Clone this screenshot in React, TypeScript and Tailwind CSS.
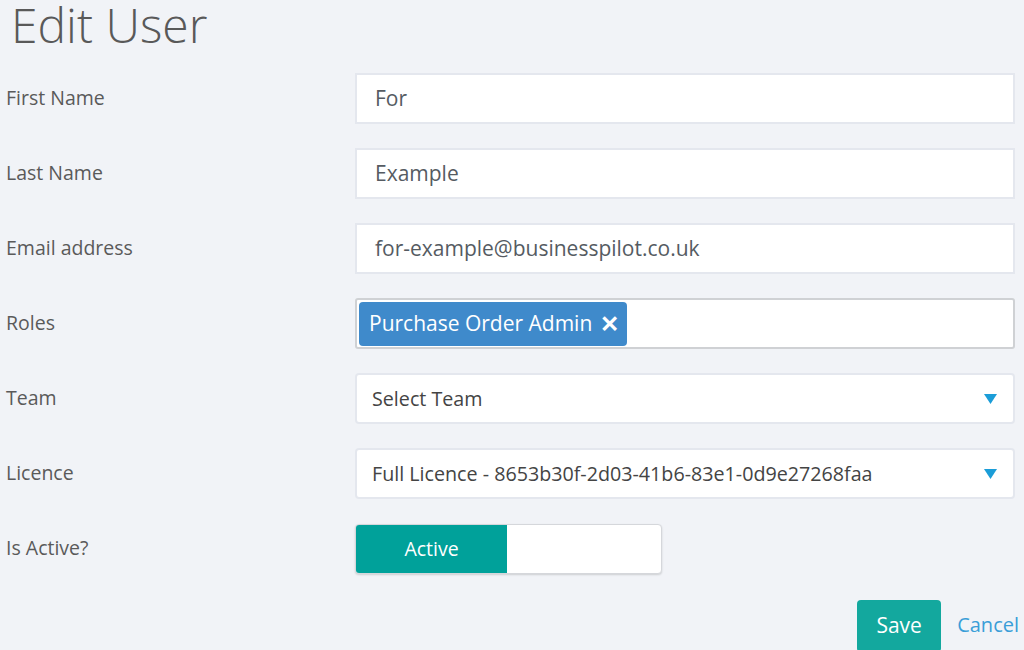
import React from "react";

const Row = ({ label, children }: { label: string; children: React.ReactNode }) => (
  <div className="flex items-center h-[51px]">
    <div className="w-[349px] text-[19.5px] text-[#5a5a5a] -mt-[2px]">{label}</div>
    <div className="w-[660px]">{children}</div>
  </div>
);

const TextBox = ({ value }: { value: string }) => (
  <div className="h-[51px] bg-white border-2 border-[#e4e7ee] flex items-center pl-[18px] text-[21px] text-[#555b62]">
    {value}
  </div>
);

const Select = ({ value }: { value: string }) => (
  <div className="h-[51px] bg-white border-2 border-[#e4e7ee] rounded-[4px] flex items-center pl-[15px] pr-[16px] text-[19.7px] text-[#444]">
    <span className="flex-1">{value}</span>
    <svg width="13" height="10" viewBox="0 0 13 10">
      <path d="M0 0 L13 0 L6.5 10 Z" fill="#1b9dd8" />
    </svg>
  </div>
);

export default function App() {
  return (
    <div
      className="w-[1024px] h-[650px] bg-[#f1f3f7] overflow-hidden pl-[6px]"
      style={{ fontFamily: '"Open Sans", sans-serif' }}
    >
      <div className="h-[81px] -mt-[8px] pl-[5px] text-[48px] font-light text-[#595959] leading-[66px]">Edit User</div>
      <div className="flex flex-col gap-[24px]">
        <Row label="First Name">
          <TextBox value="For" />
        </Row>
        <Row label="Last Name">
          <TextBox value="Example" />
        </Row>
        <Row label="Email address">
          <TextBox value="for-example@businesspilot.co.uk" />
        </Row>
        <Row label="Roles">
          <div className="h-[51px] bg-white border-2 border-[#cfd1d4] rounded-[3px] flex items-center pl-[2px]">
            <div className="h-[44px] bg-[#3f8acb] rounded-[4px] flex items-center pl-[10px] pr-[8px] text-white text-[21px]">
              Purchase Order Admin
              <span className="ml-[8px] font-bold text-[23px] leading-none">✕</span>
            </div>
          </div>
        </Row>
        <Row label="Team">
          <Select value="Select Team" />
        </Row>
        <Row label="Licence">
          <Select value="Full Licence - 8653b30f-2d03-41b6-83e1-0d9e27268faa" />
        </Row>
        <Row label="Is Active?">
          <div className="w-[307px] h-[50px] bg-white border border-[#d5d7db] rounded-[4px] shadow-[0_1px_2px_rgba(0,0,0,0.15)] flex overflow-hidden">
            <div className="w-[151px] bg-[#00a19a] text-white text-[19.5px] flex items-center justify-center">Active</div>
          </div>
        </Row>
      </div>
      <div className="flex items-center justify-end mt-[26px] pr-[5px] gap-[16px]">
        <button className="h-[52px] w-[84px] bg-[#13a89e] rounded-[4px] text-white text-[21px]">Save</button>
        <span className="text-[20px] text-[#3a9ed8] -mt-[2px]">Cancel</span>
      </div>
    </div>
  );
}
